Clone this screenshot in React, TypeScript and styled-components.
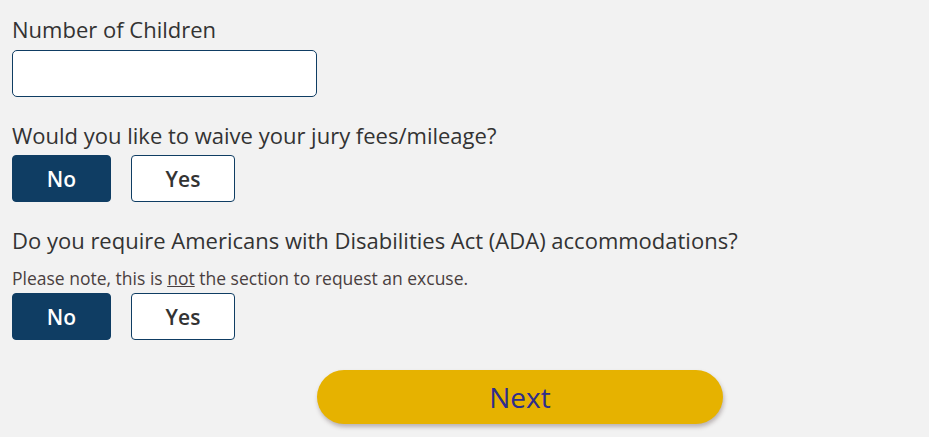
import styled, { createGlobalStyle } from "styled-components"

const GlobalStyle = createGlobalStyle`
  html, body {
    margin: 0;
    padding: 0;
    background: #f2f2f2;
  }
  body {
    font-family: "Open Sans", "Liberation Sans", sans-serif;
    color: #333;
  }
`

type ChoiceProps = {
  selected?: boolean
}

const Form = styled.div`
  padding: 15px 12px 12px;
  display: flex;
  flex-direction: column;
  width: 905px;
`

const Label = styled.div`
  font-size: 22px;
  line-height: 28px;
  color: #333;
  white-space: nowrap;
`

const Field = styled.div`
  display: flex;
  flex-direction: column;
  margin-bottom: 24px;
`

const Input = styled.input`
  box-sizing: border-box;
  width: 305px;
  height: 47px;
  margin-top: 7px;
  border: 1px solid #0f3d63;
  border-radius: 5px;
  background: #fff;
  font: inherit;
`

const Note = styled.div`
  font-size: 17.5px;
  line-height: 20px;
  color: #4a3f3f;
  margin: 14px 0 -1px;
  white-space: nowrap;
  u {
    text-decoration: underline;
  }
`

const Choices = styled.div`
  display: flex;
  gap: 20px;
  margin-top: 6px;
`

const Choice = styled.button<ChoiceProps>`
  box-sizing: border-box;
  height: 47px;
  width: ${(p) => (p.selected ? "99px" : "104px")};
  border-radius: 4px;
  border: 1px solid #0f3d63;
  background: ${(p) => (p.selected ? "#0f3d63" : "#fff")};
  color: ${(p) => (p.selected ? "#fff" : "#333")};
  font-family: "Open Sans", "Liberation Sans", sans-serif;
  font-size: 21px;
  font-weight: 600;
  cursor: pointer;
`

const Footer = styled.div`
  display: flex;
  justify-content: center;
  margin-top: 6px;
  padding-left: 111px;
`

const NextButton = styled.button`
  width: 406px;
  height: 54px;
  border: none;
  border-radius: 27px;
  background: #e6b200;
  color: #2e2d8c;
  font-family: "Open Sans", "Liberation Sans", sans-serif;
  font-size: 28px;
  font-weight: 500;
  box-shadow: 1px 3px 4px rgba(80, 60, 60, 0.35);
  cursor: pointer;
`

export default function App() {
  return (
    <>
      <GlobalStyle />
      <Form>
        <Field>
          <Label>Number of Children</Label>
          <Input type="text" />
        </Field>
        <Field>
          <Label>Would you like to waive your jury fees/mileage?</Label>
          <Choices>
            <Choice selected>No</Choice>
            <Choice>Yes</Choice>
          </Choices>
        </Field>
        <Field>
          <Label>Do you require Americans with Disabilities Act (ADA) accommodations?</Label>
          <Note>
            Please note, this is <u>not</u> the section to request an excuse.
          </Note>
          <Choices>
            <Choice selected>No</Choice>
            <Choice>Yes</Choice>
          </Choices>
        </Field>
        <Footer>
          <NextButton>Next</NextButton>
        </Footer>
      </Form>
    </>
  )
}
